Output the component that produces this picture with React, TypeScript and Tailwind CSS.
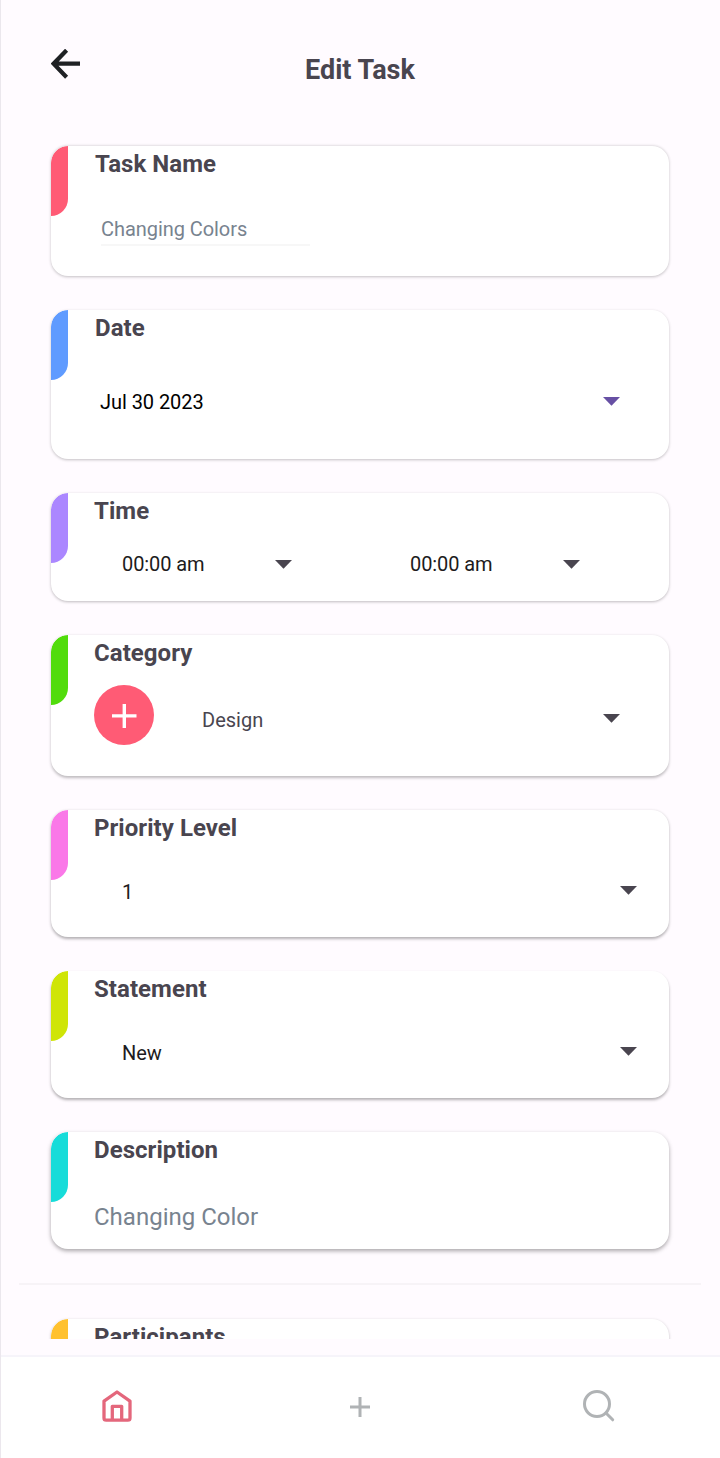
import type { ReactNode } from "react";

function Card({
  title,
  tab,
  size,
  inset = "pl-[26px]",
  children,
}: {
  title: string;
  tab: string;
  size: string;
  inset?: string;
  children?: ReactNode;
}) {
  return (
    <section
      className={`flex shrink-0 overflow-hidden rounded-[17px] bg-white ${size}`}
    >
      <div
        className={`h-[70px] w-[17px] shrink-0 rounded-tl-[17px] rounded-br-[17px] ${tab}`}
      />
      <div className={`flex flex-1 flex-col ${inset}`}>
        <h2 className="h-9 text-[24px] leading-[37px] font-bold tracking-[0.05px] whitespace-nowrap text-[#49454f]">
          {title}
        </h2>
        {children}
      </div>
    </section>
  );
}

function Caret({ className = "text-[#49454f]" }: { className?: string }) {
  return (
    <svg width="17" height="10" viewBox="0 0 17 10" className={`shrink-0 ${className}`}>
      <path d="M0 0h17L8.5 8.7z" fill="currentColor" />
    </svg>
  );
}

function TimeSelect() {
  return (
    <div className="flex w-[170px] items-center justify-between text-[20px] leading-6 text-[#1d1b20]">
      <span className="tracking-[-0.08px]">00:00 am</span>
      <Caret className="mt-0.5 text-[#49454f]" />
    </div>
  );
}

export default function App() {
  return (
    <div className="flex h-[1458px] w-[720px] flex-col overflow-hidden border-l border-[#ebe7ed] bg-[#fffbff] font-['Roboto',sans-serif]">
      <header className="flex h-[142px] shrink-0 pl-[50px]">
        <svg width="30" height="30" viewBox="0 0 30 30" className="mt-[49px] shrink-0 text-[#1f2124]">
          <path
            d="M15.6 1.2L2.6 14.7l13 13.5M2 14.7h27"
            fill="none"
            stroke="currentColor"
            strokeWidth="4.2"
          />
        </svg>
        <h1 className="mt-[54px] ml-[224px] text-[27px] leading-8 font-bold whitespace-nowrap text-[#49454f]">
          Edit Task
        </h1>
      </header>

      <main className="flex h-[1197px] shrink-0 flex-col overflow-hidden pt-1 pr-[51px] pl-[50px]">
        <Card title="Task Name" tab="bg-[#ff5b75]" inset="pl-[27px]" size="h-[130px] shadow-[0_0.5px_3px_rgba(0,0,0,0.24)]">
          <div className="mt-[35px] ml-1.5 h-[29px] w-[209px] border-b-2 border-[#f7f7f7] text-[20px] leading-6 text-[#78838f]">
            <span className="tracking-[-0.06px]">Changing Colors</span>
          </div>
        </Card>

        <Card title="Date" tab="bg-[#5f9bff]" inset="pl-[27px]" size="mt-[34px] h-[149px] shadow-[0_1px_3px_rgba(0,0,0,0.24)]">
          <div className="mt-11 mr-[49px] ml-[5px] flex items-center justify-between text-[20px] leading-6 text-black">
            <span className="tracking-[-0.06px]">Jul 30 2023</span>
            <Caret className="text-[#6750a4]" />
          </div>
        </Card>

        <Card title="Time" tab="bg-[#ab87ff]" size="mt-[34px] h-[108px] shadow-[0_1px_3px_rgba(0,0,0,0.26)]">
          <div className="mt-[23px] ml-7 flex gap-[118px]">
            <TimeSelect />
            <TimeSelect />
          </div>
        </Card>

        <Card title="Category" tab="bg-[#51dc0c]" size="mt-[34px] h-[141px] shadow-[0_1.5px_3px_rgba(0,0,0,0.26)]">
          <div className="mt-3.5 mr-[49px] flex items-center">
            <div className="flex size-[60px] items-center justify-center rounded-full bg-[#ff5b75]">
              <svg width="26" height="26" viewBox="0 0 26 26" className="mt-0.5">
                <path d="M13.3 1v24M1 12.9h24.5" stroke="white" strokeWidth="3.4" fill="none" />
              </svg>
            </div>
            <span className="mt-[9px] ml-12 flex-1 text-[20px] leading-6 text-[#49454f]">Design</span>
            <div className="mt-2">
              <Caret />
            </div>
          </div>
        </Card>

        <Card title="Priority Level" tab="bg-[#fa78e8]" size="mt-[34px] h-[127px] shadow-[0_1.5px_3px_rgba(0,0,0,0.3)]">
          <div className="mt-[33px] mr-8 ml-7 flex items-center justify-between text-[20px] leading-6 text-[#1d1b20]">
            <span className="mt-px">1</span>
            <Caret className="mb-0.5 text-[#49454f]" />
          </div>
        </Card>

        <Card title="Statement" tab="bg-[#cfe507]" size="mt-[34px] h-[127px] shadow-[0_2px_3px_rgba(0,0,0,0.3)]">
          <div className="mt-[33px] mr-8 ml-7 flex items-center justify-between text-[20px] leading-6 text-[#1d1b20]">
            <span className="mt-px">New</span>
            <Caret className="mb-0.5 text-[#49454f]" />
          </div>
        </Card>

        <Card title="Description" tab="bg-[#17dcd9]" size="mt-[34px] h-[117px] shadow-[0_2px_4px_rgba(0,0,0,0.34)]">
          <div className="mt-[35px] text-[24px] leading-[29px] text-[#78838f]">Changing Color</div>
        </Card>

        <div className="-mr-8 -ml-8 mt-[34px] h-0.5 shrink-0 bg-[#f7f3f7]" />

        <Card title="Participants" tab="bg-[#ffc12f]" size="mt-[34px] h-[130px] shadow-[0_1px_3px_rgba(0,0,0,0.26)]" />
      </main>

      <nav className="mt-4 flex flex-1 border-t-2 border-[#f6f4fa] bg-white">
        <div className="flex w-[232px] justify-center pt-[33px]">
          <svg width="30" height="32" viewBox="0 0 30 32" fill="none" stroke="#e4677c" strokeWidth="3.3" strokeLinejoin="round">
            <path d="M2 11.2L15 2l13 9.2V28a2.2 2.2 0 0 1-2.2 2.2H4.2A2.2 2.2 0 0 1 2 28z" />
            <path d="M10.3 30V16.3h9.4V30" />
          </svg>
        </div>
        <div className="flex w-[254px] justify-center pt-10">
          <svg width="20" height="20" viewBox="0 0 20 20" stroke="#b0b3b5" strokeWidth="3" fill="none">
            <path d="M10 0v20M0 10h20" />
          </svg>
        </div>
        <div className="flex flex-1 pt-[33px] pl-[96px]">
          <svg width="32" height="32" viewBox="0 0 32 32" stroke="#b0b3b5" strokeWidth="3" fill="none" strokeLinecap="round">
            <circle cx="14" cy="14" r="12.5" />
            <path d="M23.2 23.2l6.5 6.6" />
          </svg>
        </div>
      </nav>
    </div>
  );
}
